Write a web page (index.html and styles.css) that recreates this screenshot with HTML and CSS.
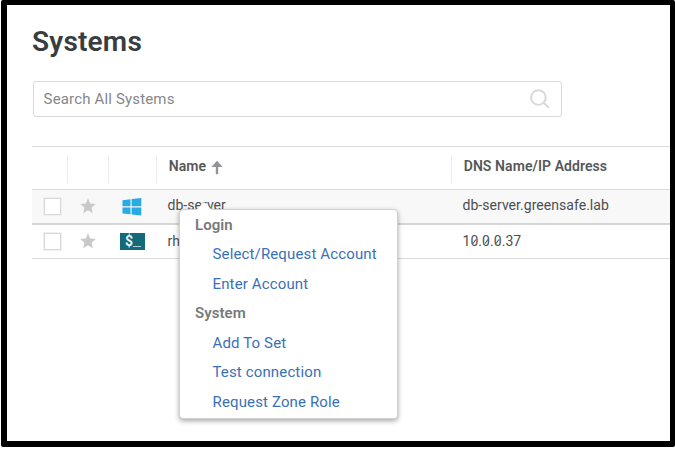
FILE: index.html
```html
<!DOCTYPE html>
<html lang="en">
<head>
<meta charset="utf-8">
<title>Systems</title>
<link rel="stylesheet" href="styles.css">
</head>
<body>
<main class="frame">
  <h1 class="title">Systems</h1>
  <div class="search">
    <span class="placeholder">Search All Systems</span>
    <svg class="search-icon" width="20" height="20" viewBox="0 0 20 20"><circle cx="8.4" cy="8.500" r="7.300"/><path d="M13.700 13.700 18.800 18.800"/></svg>
  </div>
  <section class="table">
    <div class="row head">
      <div class="sep"></div><div class="sep"></div><div class="sep"></div>
      <div class="sep label"><span>Name</span><svg class="arrow" width="12" height="15" viewBox="0 0 12 15"><path class="stem" d="M6 14.200V3"/><path class="tip" d="M6 .8 11.600 7H.4z"/></svg></div>
      <div class="label">DNS Name/IP Address</div>
    </div>
    <div class="row selected">
      <div class="check"><span class="box"></span></div>
      <div class="fav"><svg width="16" height="16" viewBox="0 0 16 16"><path d="M8 .3 10.200 5.600l5.500.4-4.200 3.700 1.300 5.600L8 12.300l-4.800 3 1.300-5.600L.3 6l5.500-.4z"/></svg></div>
      <div class="os"><svg width="20" height="18" viewBox="0 0 20 18"><path fill="#29abe2" d="M.5 2.300 8.500 1.200V8.300H.5zM9.600 1.050 19.300 0V8.300H9.600zM.5 9.400H8.500V16.300L.5 15.400zM9.600 9.400H19.300V17.600L9.600 16.400z"/></svg></div>
      <div class="cell">db-server
        <nav class="menu">
          <div class="group">Login</div>
          <a class="item">Select/Request Account</a>
          <a class="item">Enter Account</a>
          <div class="group">System</div>
          <a class="item">Add To Set</a>
          <a class="item">Test connection</a>
          <a class="item">Request Zone Role</a>
        </nav>
      </div>
      <div class="cell">db-server.greensafe.lab</div>
    </div>
    <div class="row plain">
      <div class="check"><span class="box"></span></div>
      <div class="fav"><svg width="16" height="16" viewBox="0 0 16 16"><path d="M8 .3 10.200 5.600l5.500.4-4.200 3.700 1.300 5.600L8 12.300l-4.800 3 1.300-5.600L.3 6l5.500-.4z"/></svg></div>
      <div class="os"><span class="shell">$<i class="cursor"></i></span></div>
      <div class="cell">rhel</div>
      <div class="cell ip">1<span class="zero">0</span>.<span class="zero">0</span>.<span class="zero">0</span>.37</div>
    </div>
  </section>
</main>
</body>
</html>
```

FILE: styles.css
```css
* { box-sizing: border-box; }
body { margin: 0; background: #fff; font-family: Roboto, sans-serif; color: #4c4f52; overflow: hidden; }
.frame {
  width: 674px; height: 447px; margin-left: 1px; padding: 19px 0 0 25px;
  border: solid #000; border-width: 5px 5px 6px 6px; border-radius: 2px; background: #fff;
}
.title { margin: 0 0 22px; height: 35px; font-size: 28px; line-height: 35px; font-weight: 600; letter-spacing: .2px; color: #3a3d40; }
.search {
  display: flex; align-items: center; justify-content: space-between;
  width: 529px; height: 36px; margin-left: 1px; padding: 0 11px 0 9.600px;
  border: 1px solid #d9d9d9; border-radius: 3px;
}
.placeholder { font-size: 15px; letter-spacing: .16px; color: #85878a; }
.search-icon { fill: none; stroke: #d9d9db; stroke-width: 2; }
.table { margin-top: 29px; border-top: 1px solid #dcdcdc; }
.row { display: grid; grid-template-columns: 36px 41px 48px 295px 1fr; }
.head { height: 43px; padding: 9px 0 6px; border-bottom: 1px solid #dcdcdc; }
.sep { border-right: 1px solid #ececec; }
.label { display: flex; align-items: center; height: 20px; padding-left: 11.700px; font-size: 14px; font-weight: 600; letter-spacing: .08px; color: #55585b; }
.sep.label { height: 27px; padding-bottom: 7px; }
.arrow { margin: 3px 0 0 5px; }
.stem { fill: none; stroke: #929497; stroke-width: 2.400; }
.tip { fill: #929497; }
.row.selected { height: 35px; background: #f8f8f8; border-bottom: 2px solid #d6d6d6; }
.row.plain { height: 34px; border-bottom: 1px solid #dcdcdc; }
.check, .fav, .os, .cell { display: flex; align-items: center; }
.check { padding-left: 12px; }
.box { width: 17px; height: 17px; border: 1px solid #d8d8d8; background: #fff; box-shadow: 0 0 0 1px #f0f0f0; }
.selected .box, .selected .fav svg { margin-top: -1px; }
.plain .box, .plain .fav svg { margin-top: -1px; }
.fav { padding-left: 12px; }
.fav svg { fill: #c9c9c9; }
.os { padding-left: 11px; }
.selected .os { padding-left: 13px; }
.shell { display: flex; width: 25px; height: 17px; padding-left: 5px; background: #14697b; color: #e6f3f5; font-weight: 700; font-size: 14px; line-height: 16px; }
.cursor { width: 8px; height: 1px; margin-top: 13px; background: #a7d0d8; }
.cell { position: relative; padding-left: 10.500px; padding-bottom: 3px; font-size: 14px; letter-spacing: .04px; }
.plain .cell { padding-bottom: 2px; }
.zero { position: relative; }
.zero::after {
  content: ""; position: absolute; left: 3.700px; top: 6px; width: 1px; height: 5px;
  background: currentColor; transform: rotate(35deg);
}
.menu {
  position: absolute; z-index: 2; left: 22px; top: 19px; width: 219px; height: 210px;
  background: #fff; border: 1px solid #d0d0d0; border-radius: 4px; box-shadow: 0 2px 5px rgba(0,0,0,.35);
  padding: .5px 0 0 15px;
}
.menu::before {
  content: ""; position: absolute; left: 16px; top: -8px;
  border: solid transparent; border-width: 0 8px 8px; border-bottom-color: #fff;
}
.group, .item { display: block; height: 29.500px; line-height: 29.500px; font-size: 15px; white-space: nowrap; letter-spacing: .14px; }
.group { font-weight: 600; color: #77797b; letter-spacing: .06px; }
.item { padding-left: 17.500px; color: #3b70b7; }
```
